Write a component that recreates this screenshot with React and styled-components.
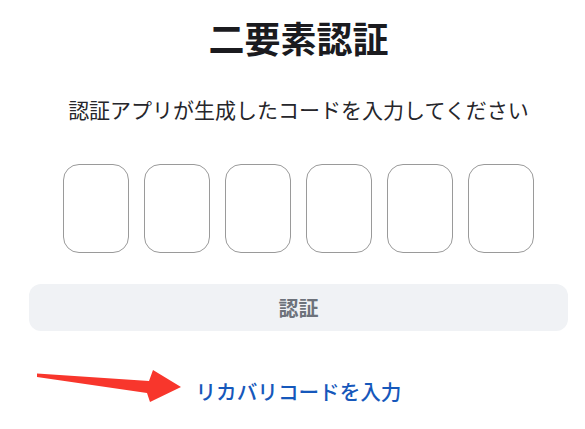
import React from 'react'
import styled, { createGlobalStyle } from 'styled-components'

const GlobalStyle = createGlobalStyle`
  html, body {
    margin: 0;
    padding: 0;
    background: #ffffff;
    font-family: "Noto Sans CJK JP", "Noto Sans", sans-serif;
  }
`

const Page = styled.div`
  position: relative;
  width: 585px;
  height: 429px;
  overflow: hidden;
`

const Card = styled.div`
  width: 539px;
  margin-left: 29px;
  padding-top: 16px;
  display: flex;
  flex-direction: column;
  align-items: center;
`

const Title = styled.h1`
  margin: 0;
  font-size: 36px;
  line-height: 43px;
  font-weight: 700;
  color: #1b1b1f;
`

const Lead = styled.p`
  margin: 35px 0 0;
  font-size: 21px;
  line-height: 31px;
  color: #26262b;
`

const CodeRow = styled.div`
  margin-top: 39px;
  display: flex;
  gap: 15px;
`

const Digit = styled.input`
  box-sizing: border-box;
  width: 66px;
  height: 89px;
  border: 1px solid #9a9a9a;
  border-radius: 16px;
  background: #fff;
  font-size: 32px;
  text-align: center;
  outline: none;
`

const SubmitButton = styled.button`
  margin-top: 31px;
  width: 100%;
  height: 47px;
  border: none;
  border-radius: 12px;
  background: #f0f2f5;
  color: #6d727b;
  font-family: inherit;
  font-size: 20px;
  font-weight: 700;
`

const RecoveryLink = styled.a`
  margin-top: 45px;
  font-size: 20.6px;
  line-height: 30px;
  font-weight: 500;
  color: #1658bb;
  text-decoration: none;
  cursor: pointer;
`

const Arrow = styled.svg`
  position: absolute;
  left: 0;
  top: 0;
  pointer-events: none;
`

export default function App() {
  const digits = [0, 1, 2, 3, 4, 5]
  return (
    <Page>
      <GlobalStyle />
      <Card>
        <Title>二要素認証</Title>
        <Lead>認証アプリが生成したコードを入力してください</Lead>
        <CodeRow>
          {digits.map(i => (
            <Digit key={i} maxLength={1} inputMode="numeric" aria-label={`digit ${i + 1}`} />
          ))}
        </CodeRow>
        <SubmitButton>認証</SubmitButton>
        <RecoveryLink>リカバリコードを入力</RecoveryLink>
      </Card>
      <Arrow width="585" height="429" viewBox="0 0 585 429">
        <path d="M37 373.5 L149 381 L153 370 L181 387 L150 402 L147 393 L37 377 Z" fill="#f8362c" />
      </Arrow>
    </Page>
  )
}
